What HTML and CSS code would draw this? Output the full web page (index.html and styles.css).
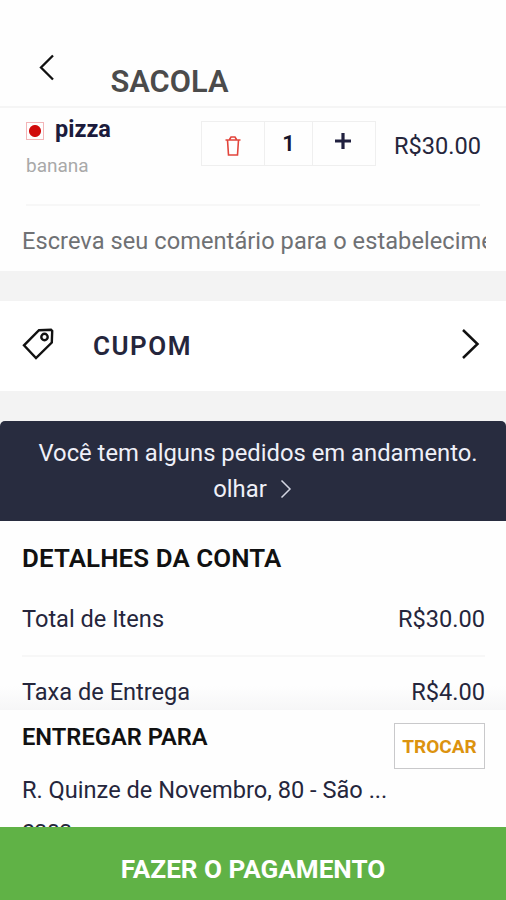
FILE: index.html
```html
<!DOCTYPE html>
<html lang="pt-BR">
<head>
<meta charset="utf-8">
<title>Sacola</title>
<link rel="stylesheet" href="styles.css">
</head>
<body>
<div class="app">
  <header class="header">
    <svg class="back" width="18" height="28" viewBox="0 0 18 28"><path d="M16 1.500 4 13.500 16 25.500"/></svg>
    <h1 class="title">SACOLA</h1>
  </header>
  <section class="cart">
    <div class="item">
      <div class="product">
        <div class="name"><span class="mark"></span><span>pizza</span></div>
        <div class="extra">banana</div>
      </div>
      <div class="stepper">
        <span class="cell remove"><svg width="18" height="22" viewBox="0 0 18 22"><path d="M1.500 5H16.500M5.500 4.500 7 2H11L12.500 4.500M3.500 5 4.500 20H13.500L14.500 5"/></svg></span>
        <span class="cell count">1</span>
        <span class="cell add"><svg width="18" height="18" viewBox="0 0 18 18"><path d="M9 1V17M1 9H17"/></svg></span>
      </div>
      <span class="price">R$30.00</span>
    </div>
    <div class="comment">Escreva seu comentário para o estabelecimento</div>
  </section>
  <section class="coupon">
    <svg class="tag" width="32" height="32" viewBox="0 0 32 32"><path d="M17 2.200 29 1.800 30.200 3 29.800 14.500 14 30 2 17.300Z"/><circle cx="22.500" cy="9" r="3.200"/></svg>
    <span class="coupon-label">CUPOM</span>
    <svg class="next" width="20" height="34" viewBox="0 0 20 34"><path d="M2 3 16.500 17 2 31"/></svg>
  </section>
  <section class="banner">
    <div class="banner-text">Você tem alguns pedidos em andamento.</div>
    <div class="banner-link"><span>olhar</span><svg width="12" height="20" viewBox="0 0 12 20"><path d="M1.500 1.500 10 10 1.500 18.500"/></svg></div>
  </section>
  <section class="bill">
    <h2 class="bill-title">DETALHES DA CONTA</h2>
    <div class="bill-row"><span>Total de Itens</span><span>R$30.00</span></div>
    <div class="bill-row fee"><span>Taxa de Entrega</span><span>R$4.00</span></div>
  </section>
  <section class="delivery">
    <div class="address">
      <h2 class="delivery-title">ENTREGAR PARA</h2>
      <div class="street">R. Quinze de Novembro, 80 - São ...</div>
      <div class="place">casa</div>
    </div>
    <button class="change">TROCAR</button>
  </section>
  <button class="pay">FAZER O PAGAMENTO</button>
</div>
</body>
</html>
```

FILE: styles.css
```css
* { box-sizing: border-box; }
body { margin: 0; font-family: Roboto, sans-serif; background: #f3f3f3; }
h1, h2 { margin: 0; font-weight: 600; }
button { font-family: inherit; padding: 0; border: 0; }
svg { display: block; fill: none; flex: none; }
.app { width: 506px; height: 900px; overflow: hidden; display: flex; flex-direction: column; color: #25263c; font-size: 23.6px; white-space: nowrap; }
.app > * { flex: none; }

.header { height: 108px; display: flex; align-items: flex-start; background: #fefefe; border-bottom: 2px solid #f5f5f5; padding: 54px 0 0 37px; }
.back { stroke: #111; stroke-width: 2.3; }
.title { margin-left: 55.5px; font-size: 30.8px; line-height: 55px; color: #4b4b4b; }

.cart { height: 163px; background: #fefefe; padding: 0 20px 0 22px; }
.item { height: 98px; display: flex; margin: 0 6px 0 4px; border-bottom: 2px solid #f7f7f7; }
.item > * { flex: none; }
.product { width: 175px; }
.name { display: flex; align-items: center; gap: 11px; height: 42px; font-size: 23.5px; font-weight: 700; color: #1b1b3c; }
.mark { width: 18px; height: 18px; margin-top: 3px; border: 1px solid #f3b5b8; background: radial-gradient(circle, #d10a0a 5.500px, transparent 6.500px); }
.extra { font-size: 19px; line-height: 32px; color: #a9a9a9; }
.stepper { display: grid; grid-template-columns: 62px 48px 63px; width: 175px; height: 45px; margin-top: 13px; border: 1px solid #efefef; }
.cell { display: flex; align-items: center; justify-content: center; }
.cell + .cell { border-left: 1px solid #efefef; }
.remove svg { margin-top: 5px; stroke: #e2453c; stroke-width: 1.6; }
.count { font-size: 22px; font-weight: 600; color: #15152c; }
.add svg { margin: -5px 2px 0 0; stroke: #20203f; stroke-width: 3.2; }
.price { margin-left: 18px; line-height: 77px; }
.comment { height: 65px; line-height: 71px; overflow: hidden; color: #6f7174; letter-spacing: 0.06px; }

.coupon { height: 90px; margin: 30px 0; display: flex; align-items: center; background: #fff; padding: 0 25px 0 22px; }
.tag { stroke: #111; stroke-width: 2.4; margin-top: -4px; }
.coupon-label { flex: 1; margin-left: 39px; font-size: 26px; font-weight: 600; letter-spacing: 1.5px; }
.next { stroke: #111; stroke-width: 2.5; margin-top: -4px; }

.banner { height: 100px; padding: 14px 0 0 10px; background: #282c3f; border-radius: 5px 5px 0 0; color: #eff0f8; text-align: center; line-height: 36px; font-size: 23.8px; }
.banner-link { display: flex; justify-content: center; align-items: center; gap: 13px; padding-right: 11px; }
.banner-link svg { stroke: #d3d5e2; stroke-width: 1.5; }

.bill { height: 189px; padding: 16px 21px 0 22px; background: linear-gradient(#fefefe 165px, #f6f6f7); overflow: hidden; }
.bill-title { font-size: 25.9px; line-height: 42px; color: #111; letter-spacing: 0.1px; }
.bill-row { height: 78px; display: flex; justify-content: space-between; line-height: 80px; border-bottom: 2px solid #f7f7f7; }
.fee { line-height: 70px; }

.delivery { height: 117px; padding: 13px 21px 0 22px; display: flex; justify-content: space-between; background: #fefefe; overflow: hidden; }
.delivery-title { font-size: 23.7px; line-height: 28px; color: #111; }
.street { margin-top: 20px; line-height: 38px; }
.place { line-height: 41px; }
.change { width: 91px; height: 46px; border: 1px solid #c9c9cb; background: #fff; color: #dc930f; font-size: 19px; font-weight: 700; }
.pay { height: 73px; background: #60b246; color: #fff; font-size: 26.1px; font-weight: 700; padding-top: 10px; }
```
